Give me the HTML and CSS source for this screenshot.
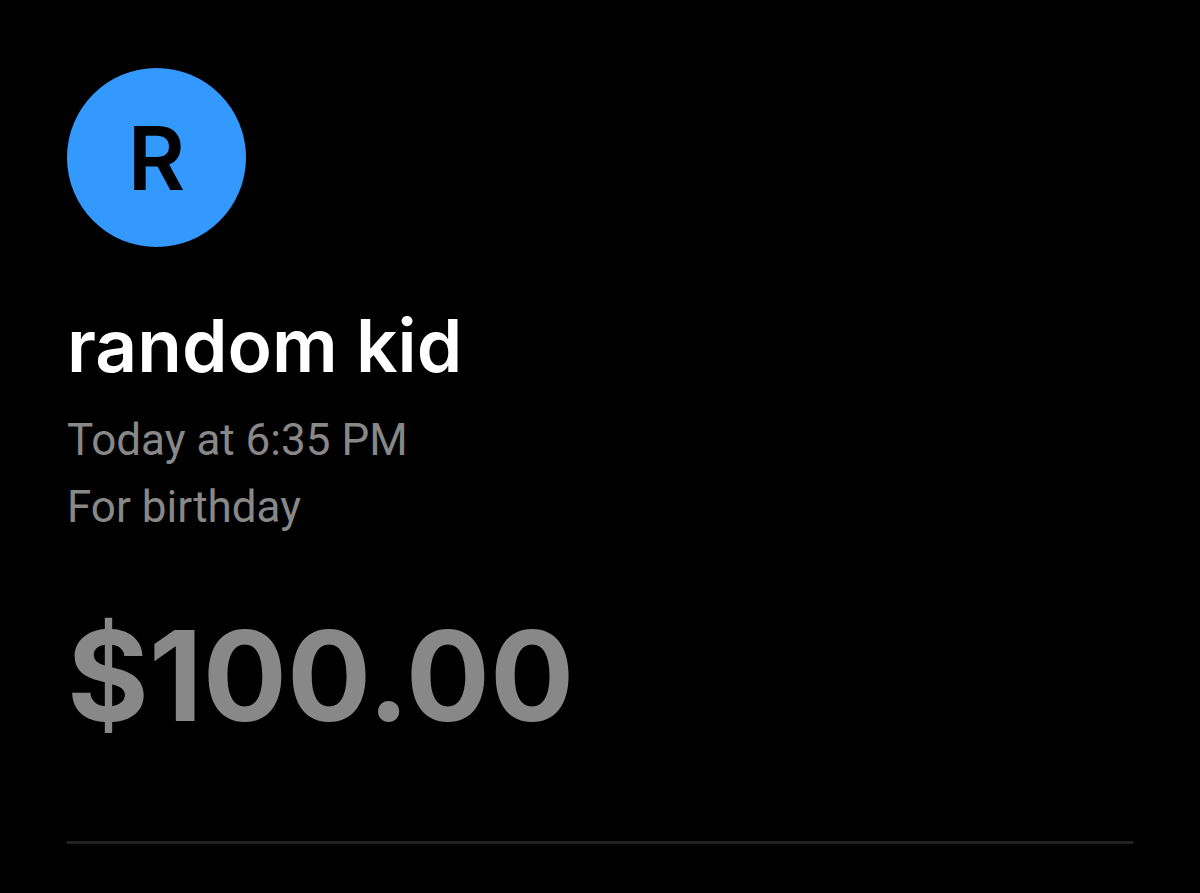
FILE: index.html
```html
<!DOCTYPE html>
<html lang="en">

<head>
    <meta charset="UTF-8">
    <meta name="viewport" content="width=device-width, initial-scale=1.0">
    <link rel="stylesheet" href="styles.css">
    <title>Payment</title>
</head>

<body>
    <main class="payment">
        <div class="avatar">R</div>
        <h1 class="name">random kid</h1>
        <p class="detail">Today at 6:35 PM</p>
        <p class="detail">For birthday</p>
        <p class="amount">$100.00</p>
        <hr class="divider">
    </main>
</body>

</html>
```

FILE: styles.css
```css
* {
    margin: 0;
    padding: 0;
    box-sizing: border-box;
}

body {
    background-color: #000;
    font-family: Inter, "Liberation Sans", sans-serif;
}

.payment {
    padding: 68px 67px 48px;
}

.avatar {
    display: flex;
    align-items: center;
    justify-content: center;
    width: 179px;
    height: 179px;
    margin-bottom: 56px;
    border-radius: 50%;
    background-color: #3399ff;
    color: #000;
    font-size: 88px;
    font-weight: 600;
    line-height: 88px;
}

.name {
    margin-bottom: 18px;
    color: #fff;
    font-size: 73px;
    font-weight: 600;
    line-height: 86px;
}

.detail {
    color: #888;
    font-family: Roboto, sans-serif;
    font-size: 44px;
    line-height: 67px;
}

.amount {
    margin-top: 55px;
    color: #888;
    font-size: 125px;
    font-weight: 700;
    line-height: 160px;
}

.divider {
    height: 3px;
    margin-top: 85px;
    border: none;
    background-color: #222;
}
```
